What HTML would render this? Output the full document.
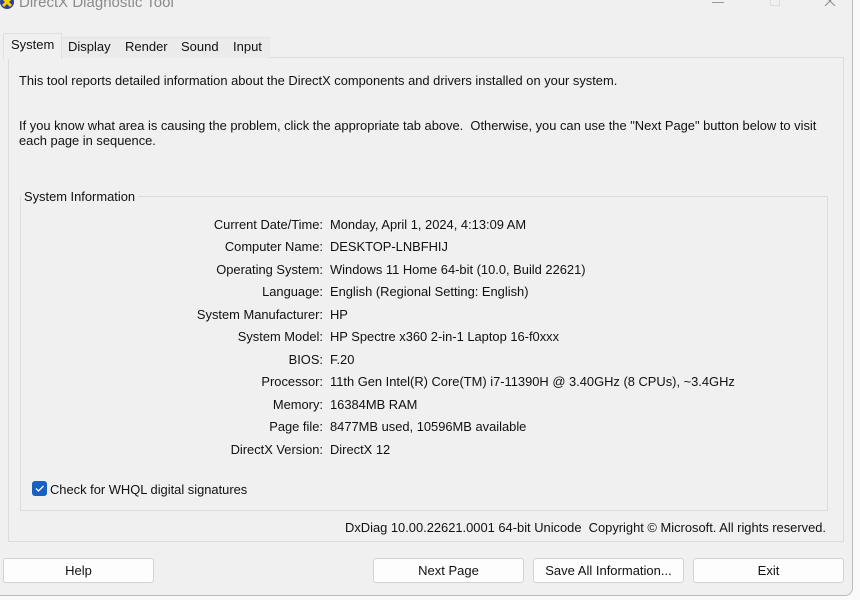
<!DOCTYPE html>
<html><head><style>
*{margin:0;padding:0;box-sizing:border-box}
body{width:860px;height:600px;background:#fafafa;font-family:"Liberation Sans",sans-serif;font-size:12.9px;color:#111;position:relative;overflow:hidden}
.win{position:absolute;left:0;top:-10px;width:853px;height:606px;background:#f0f0f0;border-right:1px solid #bbb;border-bottom:1px solid #bbb;border-radius:0 0 8px 0}
.a{position:absolute;white-space:nowrap}
.tab{position:absolute;top:36px;height:22px;line-height:22px;font-size:13px}
.panel{position:absolute;left:8px;top:57px;width:836px;height:485px;border:1px solid #dcdcdc;background:#f0f0f0}
.grp{position:absolute;left:20px;top:196px;width:808px;height:315px;border:1px solid #dcdcdc}
.btn{position:absolute;top:558px;width:151px;height:25px;background:#fdfdfd;border:1px solid #d3d3d3;border-radius:3px;text-align:center;line-height:23px;font-size:13px}
.lbl{position:absolute;right:537px;white-space:nowrap}
.val{position:absolute;left:330px;white-space:nowrap}
</style></head><body>
<div class="win"></div>
<svg class="a" style="left:0;top:-6px" width="16" height="16"><circle cx="7" cy="8" r="7" fill="#2a3f9e"/><path d="M3 4l8 8M11 4l-8 8" stroke="#f4d000" stroke-width="3"/></svg>
<div class="a" style="left:19px;top:-6px;font-size:15px;color:#8a8a8a">DirectX Diagnostic Tool</div>
<div class="a" style="left:712px;top:2px;width:12px;border-top:1px solid #999"></div>
<div class="a" style="left:770px;top:-4px;width:10px;height:10px;border:1px solid #ddd"></div>
<svg class="a" style="left:824px;top:-4px" width="12" height="10"><path d="M1 0l10 10M11 0L1 10" stroke="#888"/></svg>
<div class="panel"></div>
<div class="a" style="left:3px;top:33px;width:59px;height:26px;background:#f0f0f0;border:1px solid #e0e0e0;border-bottom:none"></div>
<div class="tab" style="left:11px;top:34px">System</div>
<div class="a" style="left:62px;top:37px;width:208px;height:21px;background:#ebebeb;border-top:1px solid #e4e4e4"></div>
<div class="tab" style="left:68px">Display</div>
<div class="tab" style="left:125px">Render</div>
<div class="tab" style="left:181px">Sound</div>
<div class="tab" style="left:233px">Input</div>
<div class="a" style="left:19px;top:73px">This tool reports detailed information about the DirectX components and drivers installed on your system.</div>
<div class="a" style="left:19px;top:118px;line-height:15px">If you know what area is causing the problem, click the appropriate tab above.&nbsp; Otherwise, you can use the "Next Page" button below to visit<br>each page in sequence.</div>
<div class="grp"></div>
<div class="a" style="left:21px;top:189px;padding:0 3px;background:#f0f0f0">System Information</div>
<div class="lbl" style="top:217px">Current Date/Time:</div><div class="val" style="top:217px">Monday, April 1, 2024, 4:13:09 AM</div>
<div class="lbl" style="top:239px">Computer Name:</div><div class="val" style="top:239px">DESKTOP-LNBFHIJ</div>
<div class="lbl" style="top:262px">Operating System:</div><div class="val" style="top:262px">Windows 11 Home 64-bit (10.0, Build 22621)</div>
<div class="lbl" style="top:284px">Language:</div><div class="val" style="top:284px">English (Regional Setting: English)</div>
<div class="lbl" style="top:307px">System Manufacturer:</div><div class="val" style="top:307px">HP</div>
<div class="lbl" style="top:329px">System Model:</div><div class="val" style="top:329px">HP Spectre x360 2-in-1 Laptop 16-f0xxx</div>
<div class="lbl" style="top:352px">BIOS:</div><div class="val" style="top:352px">F.20</div>
<div class="lbl" style="top:374px">Processor:</div><div class="val" style="top:374px">11th Gen Intel(R) Core(TM) i7-11390H @ 3.40GHz (8 CPUs), ~3.4GHz</div>
<div class="lbl" style="top:397px">Memory:</div><div class="val" style="top:397px">16384MB RAM</div>
<div class="lbl" style="top:419px">Page file:</div><div class="val" style="top:419px">8477MB used, 10596MB available</div>
<div class="lbl" style="top:442px">DirectX Version:</div><div class="val" style="top:442px">DirectX 12</div>
<div class="a" style="left:32px;top:481px;width:15px;height:15px;background:#1a5fc2;border-radius:3px"></div>
<svg class="a" style="left:32px;top:481px" width="15" height="15"><path d="M4 7.5l2.5 2.5 5-5" stroke="#fff" stroke-width="1.3" fill="none"/></svg>
<div class="a" style="left:50px;top:482px">Check for WHQL digital signatures</div>
<div class="a" style="right:34px;top:520px">DxDiag 10.00.22621.0001 64-bit Unicode&nbsp; Copyright © Microsoft. All rights reserved.</div>
<div class="btn" style="left:3px">Help</div>
<div class="btn" style="left:373px">Next Page</div>
<div class="btn" style="left:533px">Save All Information...</div>
<div class="btn" style="left:693px">Exit</div>
</body></html>
